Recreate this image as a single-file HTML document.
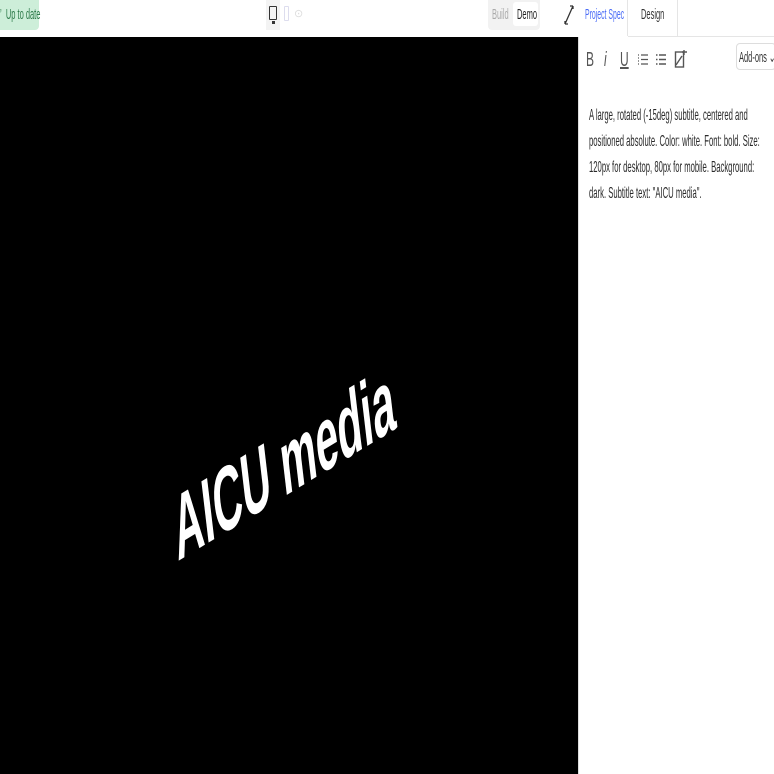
<!DOCTYPE html>
<html><head><meta charset="utf-8"><style>
*{margin:0;padding:0;box-sizing:border-box}
body{width:774px;height:774px;overflow:hidden;background:#fff;font-family:"Liberation Sans",sans-serif;position:relative}
.s{position:absolute;white-space:nowrap;transform-origin:0 0}
#stage{position:absolute;left:0;top:37px;width:578px;height:737px;background:#000;overflow:hidden}
#title{position:absolute;left:284px;top:428px;transform:translate(-50%,-50%) scaleX(0.44) rotate(-15deg);color:#fff;font-weight:bold;font-size:92px;white-space:nowrap}
</style></head><body>
<div style="position:absolute;left:0;top:0;width:39px;height:30px;background:#cdeed9;border-radius:0 0 4px 0"></div>
<div class="s" style="left:0;top:6px;font-size:15px;color:#2e7a4a;transform:scaleX(0.5)">&#8217;&nbsp;&nbsp;Up to date</div>
<div style="position:absolute;left:266px;top:0;width:14px;height:30px;background:#f3f3f3"></div>
<div style="position:absolute;left:269px;top:6px;width:8px;height:14px;border:1.5px solid #333;border-radius:1px"></div>
<div style="position:absolute;left:272px;top:21px;width:3px;height:3px;background:#333"></div>
<div style="position:absolute;left:284px;top:6px;width:5px;height:15px;border:1px solid #dde;border-radius:1px"></div>
<div class="s" style="left:294px;top:7px;font-size:11px;color:#ddd">&#8857;</div>
<div style="position:absolute;left:488px;top:0;width:52px;height:30px;background:#f2f2f2;border-radius:0 0 4px 4px"></div>
<div style="position:absolute;left:513px;top:2px;width:25px;height:24px;background:#fff;border-radius:3px"></div>
<div class="s" style="left:492px;top:6px;font-size:15px;color:#aaa;transform:scaleX(0.5)">Build</div>
<div class="s" style="left:517px;top:6px;font-size:15px;color:#222;transform:scaleX(0.5)">Demo</div>
<svg style="position:absolute;left:562px;top:4px" width="14" height="22"><path d="M11 2L3 20M11 2h-3M11 2v3M3 20h3M3 20v-3" stroke="#333" stroke-width="1.3" fill="none"/></svg>
<div style="position:absolute;left:578px;top:36px;width:196px;height:1px;background:#e5e5e5"></div>
<div style="position:absolute;left:627px;top:0;width:1px;height:37px;background:#e5e5e5"></div>
<div style="position:absolute;left:677px;top:0;width:1px;height:36px;background:#e5e5e5"></div>
<div style="position:absolute;left:578px;top:36px;width:50px;height:1px;background:#fff"></div>
<div class="s" style="left:585px;top:6px;font-size:15px;color:#4a6cf7;transform:scaleX(0.46)">Project Spec</div>
<div class="s" style="left:641px;top:6px;font-size:15px;color:#333;transform:scaleX(0.5)">Design</div>
<div id="stage"><div id="title">AICU media</div></div>
<div style="position:absolute;left:578px;top:37px;width:1px;height:737px;background:#ddd"></div>
<div class="s" style="left:586px;top:49px;font-size:20px;color:#555;transform:scaleX(0.6)">B</div>
<div class="s" style="left:604px;top:49px;font-size:20px;color:#555;font-style:italic;transform:scaleX(0.6)">i</div>
<div class="s" style="left:620px;top:49px;font-size:20px;color:#555;text-decoration:underline;transform:scaleX(0.6)">U</div>
<svg style="position:absolute;left:637px;top:52px" width="12" height="16"><path d="M1 3h1M1 6h1M1 9h1M1 12h1M4 3h7M4 7.5h7M4 12h7" stroke="#555" stroke-width="1.3"/></svg>
<svg style="position:absolute;left:655px;top:52px" width="12" height="16"><path d="M1 3h1.5M1 7.5h1.5M1 12h1.5M4 3h7M4 7.5h7M4 12h7" stroke="#555" stroke-width="1.5"/></svg>
<svg style="position:absolute;left:674px;top:48px" width="14" height="22"><rect x="1.5" y="4" width="8" height="15" fill="none" stroke="#555" stroke-width="1.4"/><path d="M2 17L8 8M10 2v5M8 4h5" stroke="#555" stroke-width="1.4"/></svg>
<div style="position:absolute;left:736px;top:43px;width:40px;height:27px;border:1px solid #ddd;border-radius:4px;background:#fff"></div>
<div class="s" style="left:739px;top:48px;font-size:15px;color:#333;transform:scaleX(0.5)">Add-ons &#8964;</div>
<div style="position:absolute;left:589px;top:103px;width:368px;font-size:16px;line-height:26px;color:#2a2a2a;transform:scaleX(0.48);transform-origin:0 0">A large, rotated (-15deg) subtitle, centered and positioned absolute. Color: white. Font: bold. Size: 120px for desktop, 80px for mobile. Background: dark. Subtitle text: "AICU media".</div>
</body></html>
